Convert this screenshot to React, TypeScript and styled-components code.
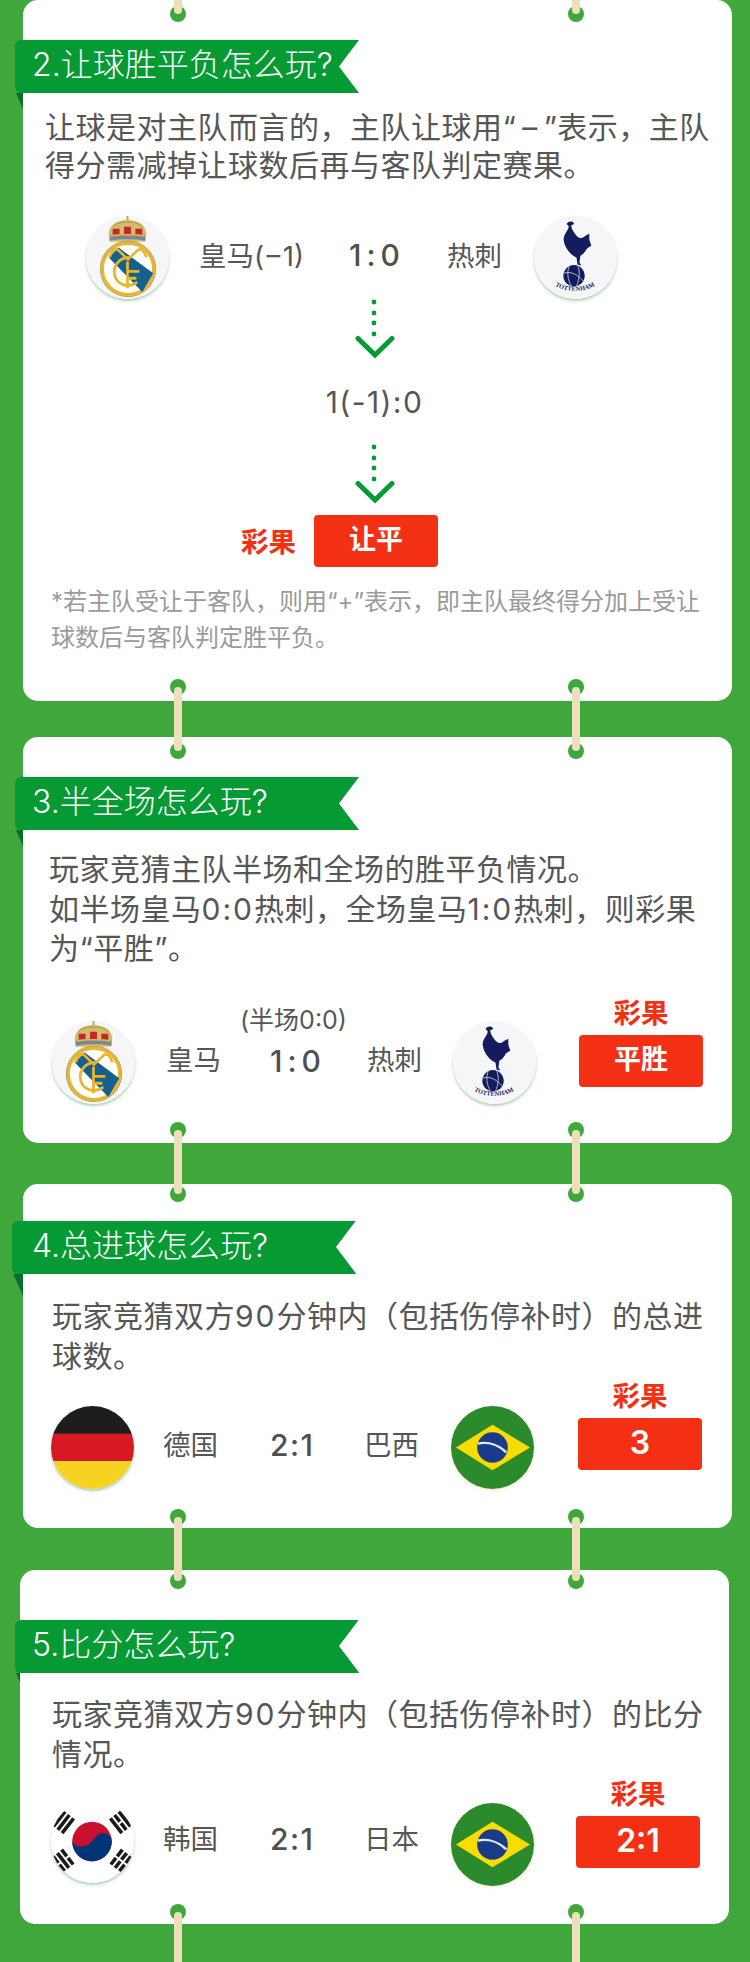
import React from "react";
import styled, { createGlobalStyle } from "styled-components";

const GREEN = "#3fa73c";
const RIBBON = "#069a34";
const RED = "#f43014";
const TEXT = "#565656";
const RING_X = [178, 576];

const Global = createGlobalStyle`
  html, body { margin: 0; padding: 0; background: ${GREEN}; }
  body { font-family: Inter, "Noto Sans CJK SC", "Noto Sans", sans-serif; }
`;

const Page = styled.div`
  width: 750px;
  height: 1962px;
  overflow: hidden;
  background: ${GREEN};
`;

const Card = styled.section<{ $left: number; $top: number; $pt: number; $pb: number }>`
  position: relative;
  box-sizing: border-box;
  width: 709px;
  margin-left: ${(p) => p.$left}px;
  margin-top: ${(p) => p.$top}px;
  padding-top: ${(p) => p.$pt}px;
  padding-bottom: ${(p) => p.$pb}px;
  background: #fff;
  border-radius: 15px;
`;

const Hole = styled.i<{ $x: number; $y: number; $from: "top" | "bottom" }>`
  position: absolute;
  left: ${(p) => p.$x - 8}px;
  ${(p) => p.$from}: ${(p) => p.$y - 8}px;
  width: 16px;
  height: 16px;
  border-radius: 50%;
  background: ${GREEN};
`;

const Peg = styled.i<{ $x: number; $top?: number; $bottom?: number; $len: number }>`
  position: absolute;
  z-index: 2;
  left: ${(p) => p.$x - 4}px;
  ${(p) => (p.$top !== undefined ? `top: ${p.$top}px;` : "")}
  ${(p) => (p.$bottom !== undefined ? `bottom: ${p.$bottom}px;` : "")}
  width: 8px;
  height: ${(p) => p.$len}px;
  border-radius: 4px;
  background: #eedfbb;
`;

const Banner = styled.h2<{ $over: number; $pad: number }>`
  position: relative;
  box-sizing: border-box;
  width: 344px;
  height: 53px;
  margin: 0 0 0 ${(p) => -p.$over}px;
  padding-left: ${(p) => p.$pad}px;
  background: ${RIBBON};
  border-radius: 6px 0 0 6px;
  color: #fff;
  font-size: 32px;
  font-weight: 300;
  line-height: 49px;
  white-space: nowrap;
  &::before {
    content: "";
    position: absolute;
    left: 1px;
    top: 53px;
    width: ${(p) => p.$over - 1}px;
    height: ${(p) => p.$over * 2}px;
    background: #05702c;
    clip-path: polygon(0 0, 100% 0, 100% 100%);
  }
  &::after {
    content: "";
    position: absolute;
    right: 0;
    top: 0;
    width: 20px;
    height: 100%;
    background: #fff;
    clip-path: polygon(100% 0, 0 50%, 100% 100%);
  }
`;

const Para = styled.p<{ $x: number; $mt: number; $lh: number }>`
  margin: ${(p) => p.$mt}px 0 0 ${(p) => p.$x}px;
  color: ${TEXT};
  font-size: 30px;
  letter-spacing: 0.5px;
  line-height: ${(p) => p.$lh}px;
  white-space: nowrap;
`;

const Num = styled.span`
  letter-spacing: 2px;
`;

const Row = styled.div<{ $mt: number; $pad: number; $cols: string }>`
  display: grid;
  grid-template-columns: ${(p) => p.$cols};
  grid-template-rows: 84px;
  align-items: center;
  margin-top: ${(p) => p.$mt}px;
  padding-left: ${(p) => p.$pad}px;
`;

const Team = styled.div<{ $inset?: number }>`
  padding-left: ${(p) => p.$inset ?? 0}px;
  margin-top: -9px;
  color: ${TEXT};
  font-size: 27.5px;
  white-space: nowrap;
`;

const Score = styled.div<{ $wide?: boolean }>`
  color: #4f4f4f;
  font-size: 30px;
  font-weight: 500;
  line-height: 44px;
  margin-top: -6px;
  letter-spacing: ${(p) => (p.$wide ? 5 : 1.5)}px;
  white-space: nowrap;
`;

const ScoreStack = styled.div`
  align-self: start;
  margin-top: -16px;
`;

const HalfNote = styled.div`
  margin-left: -30px;
  color: ${TEXT};
  font-size: 25px;
  line-height: 30px;
  white-space: nowrap;
`;

const StackScore = styled(Score)`
  line-height: 52px;
  margin-top: 0;
`;

const Badge = styled.svg<{ $nudge?: number; $glow?: boolean }>`
  display: block;
  width: 83px;
  height: 83px;
  align-self: start;
  margin-top: ${(p) => p.$nudge ?? 0}px;
  border-radius: 50%;
  box-shadow: ${(p) => (p.$glow ? "0 1px 3px rgba(240,170,120,.4)" : "0 2px 3px rgba(70, 150, 80, 0.45)")};
`;

const Result = styled.div<{ $ml: number; $mb: number }>`
  align-self: end;
  display: flex;
  flex-direction: column;
  align-items: center;
  width: 124px;
  margin-left: ${(p) => p.$ml}px;
  margin-bottom: ${(p) => p.$mb}px;
`;

const Label = styled.div`
  color: ${RED};
  font-size: 27.5px;
  font-weight: 700;
  line-height: 36px;
  margin-bottom: 4px;
  white-space: nowrap;
`;

const Pill = styled.div<{ $num?: boolean }>`
  width: 124px;
  height: 52px;
  border-radius: 4px;
  background: ${RED};
  color: #fff;
  text-align: center;
  font-size: ${(p) => (p.$num ? 32 : 27)}px;
  font-weight: 600;
  line-height: 50px;
`;

const FlowColumn = styled.div`
  display: flex;
  flex-direction: column;
  align-items: center;
  padding-right: 6px;
`;

const ArrowIcon = styled.svg<{ $mt: number }>`
  display: block;
  width: 40px;
  height: 60px;
  margin-top: ${(p) => p.$mt}px;
`;

const Calc = styled.div`
  margin-top: 23px;
  color: ${TEXT};
  font-size: 30px;
  letter-spacing: 1.4px;
  line-height: 40px;
`;

const ResultLine = styled.div`
  display: flex;
  align-items: center;
  gap: 18px;
  margin-top: 11px;
  padding-left: 218px;
`;

const InlineLabel = styled(Label)`
  margin: 2px 0 0;
`;

const Note = styled.p`
  margin: 17px 0 0 28px;
  color: #9a9a9a;
  font-size: 24px;
  line-height: 36px;
  white-space: nowrap;
`;

const Rings = ({ left, top, bottom, lead }: { left: number; top: number; bottom: number; lead?: boolean }) => (
  <>
    {RING_X.map((x) => (
      <React.Fragment key={x}>
        <Hole $x={x - left} $y={top} $from="top" />
        <Hole $x={x - left} $y={bottom} $from="bottom" />
        {lead && <Peg $x={x - left} $top={-20} $len={20 + top} />}
        <Peg $x={x - left} $bottom={bottom - 64} $len={64} />
      </React.Fragment>
    ))}
  </>
);

const Arrow = ({ mt }: { mt: number }) => (
  <ArrowIcon $mt={mt} viewBox="0 0 40 60">
    {[3, 14, 24, 35].map((y) => (
      <circle key={y} cx="19" cy={y} r="2.4" fill={RIBBON} />
    ))}
    <path d="M3 39.5 L20 56 L37 39.5" fill="none" stroke={RIBBON} strokeWidth="5" strokeLinecap="round" strokeLinejoin="miter" />
  </ArrowIcon>
);

const Madrid = () => (
  <Badge viewBox="0 0 84 84">
    <rect width="84" height="84" fill="#f6f6f8" />
    <path d="M42 0v5" stroke="#c9a83a" strokeWidth="2" />
    <path d="M23 18C23 9 32 4 42 4S61 9 61 18L60 26H24Z" fill="#d2bb6a" />
    <path d="M27 11C31 7 36 6 42 6S53 7 57 11" fill="none" stroke="#a89648" strokeWidth="1" />
    <path d="M27 13h7v6h-7zM38.5 11h7v8h-7zM50 13h7v6h-7z" fill="#c8242c" />
    <path d="M24 20C34 18 50 18 60 20V25C50 23 34 23 24 25Z" fill="#76879a" />
    <path d="M25 20.5C34 18.5 50 18.5 59 20.5" fill="none" stroke="#e0bb3c" strokeWidth="1.4" />
    <circle cx="42.5" cy="53.5" r="28.5" fill="#8d98a0" />
    <circle cx="42.5" cy="53.5" r="26.2" fill="#fff" stroke="#eab52e" strokeWidth="3.6" />
    <path d="M23 42 L33 32 L68 58 L57 77 Z" fill="#14608f" />
    <path d="M24 42C26 35 29 33 32 34L42.5 44L53 34C56 33 59 35 61 42" fill="none" stroke="#eab52e" strokeWidth="2.6" />
    <path d="M44 42C33 42 27 51 29 60C31 69 42 74 52 67" fill="none" stroke="#eab52e" strokeWidth="2.8" />
    <path d="M42 46V73M42 56H54M42 63H51" fill="none" stroke="#eab52e" strokeWidth="2.8" />
  </Badge>
);

const Spurs = () => (
  <Badge viewBox="0 0 84 84">
    <rect width="84" height="84" fill="#f6f6f8" />
    <path
      d="M33 8C35 5 39 5 40 7L41 8 38 9C37 12 40 16 43 20 47 24 50 22 52 20L56 18 56 24 58 30C55 32 53 33 53 34 51 38 48 40 47 40L46 47 48 50 44 49 43 42C38 40 31 33 30 24 30 17 36 14 35 10Z"
      fill="#141b5e"
    />
    <circle cx="40.5" cy="60.5" r="10.8" fill="#141b5e" />
    <path d="M30 58C37 55 45 60 50 66M36 50C33 56 34 65 38 71M44 50C47 56 46 64 43 71" fill="none" stroke="#d9dbe8" strokeWidth="0.8" />
    <path id="spurs-arc" d="M19 69C30 78 52 78 64 69" fill="none" />
    <text fontFamily="Liberation Serif, serif" fontSize="6.4" fontWeight="700" fill="#141b5e">
      <textPath href="#spurs-arc" startOffset="50%" textAnchor="middle">TOTTENHAM</textPath>
    </text>
  </Badge>
);

const Germany = () => (
  <Badge viewBox="0 0 84 84">
    <rect width="84" height="28.5" fill="#1d1d1b" />
    <rect y="28" width="84" height="28" fill="#d71a21" />
    <rect y="56" width="84" height="28" fill="#f6d321" />
  </Badge>
);

const Brazil = ({ nudge }: { nudge?: number }) => (
  <Badge viewBox="0 0 84 84" $nudge={nudge} $glow>
    <rect width="84" height="84" fill="#2b8a2c" />
    <path d="M42 19 L80 42 L42 65 L5 42 Z" fill="#fbdc00" />
    <circle cx="42" cy="42" r="15.5" fill="#1a3a8a" />
    <path d="M27 38C37 36 48 39 56 47" fill="none" stroke="#dfe6ee" strokeWidth="2.4" />
  </Badge>
);

const Trigram = ({ x, y, r, bars }: { x: number; y: number; r: number; bars: number[] }) => (
  <g transform={`translate(${x} ${y}) rotate(${r})`}>
    {bars.map((b, i) => {
      const yy = -7 + i * 5.5;
      return b === 3 ? (
        <rect key={i} x="-9.5" y={yy} width="19" height="3.6" fill="#1a1a1a" />
      ) : (
        <g key={i}>
          <rect x="-9.5" y={yy} width="8.5" height="3.6" fill="#1a1a1a" />
          <rect x="1" y={yy} width="8.5" height="3.6" fill="#1a1a1a" />
        </g>
      );
    })}
  </g>
);

const Korea = () => (
  <Badge viewBox="0 0 84 84">
    <rect width="84" height="84" fill="#fff" />
    <circle cx="41.5" cy="42" r="20" fill="#c8102e" />
    <path d="M21.5 42C21.5 53 30.5 62 41.5 62S61.5 53 61.5 42C61.5 36 54.5 32 49.5 34 43.5 37 42.5 44 35.5 46 29.5 48 23.5 47 21.5 42Z" fill="#003478" />
    <Trigram x={12.5} y={22.5} r={-52} bars={[3, 3, 3]} />
    <Trigram x={70.5} y={22.5} r={52} bars={[3, 1, 3]} />
    <Trigram x={12.5} y={61} r={52} bars={[1, 3, 1]} />
    <Trigram x={70.5} y={61} r={-52} bars={[1, 1, 1]} />
  </Badge>
);

export default function App() {
  return (
    <Page>
      <Global />
      <Card $left={23} $top={0} $pt={40} $pb={45}>
        <Rings left={23} top={14} bottom={14} lead />
        <Banner $over={8} $pad={17}>2.让球胜平负怎么玩?</Banner>
        <Para $x={22} $mt={15} $lh={38}>
          让球是对主队而言的，主队让球用“{"\u2009–\u2009"}”表示，主队
          <br />
          得分需减掉让球数后再与客队判定赛果。
        </Para>
        <Row $mt={32} $pad={63} $cols="84px 179px 98px 87px 84px">
          <Madrid />
          <Team $inset={29}>皇马({"\u200a–\u200a"}1)</Team>
          <Score $wide>1:0</Score>
          <Team>热刺</Team>
          <Spurs />
        </Row>
        <FlowColumn>
          <Arrow mt={-1} />
          <Calc>1(-1):0</Calc>
          <Arrow mt={22} />
        </FlowColumn>
        <ResultLine>
          <InlineLabel>彩果</InlineLabel>
          <Pill>让平</Pill>
        </ResultLine>
        <Note>
          *若主队受让于客队，则用“+”表示，即主队最终得分加上受让
          <br />
          球数后与客队判定胜平负。
        </Note>
      </Card>

      <Card $left={23} $top={36} $pt={40} $pb={38}>
        <Rings left={23} top={14} bottom={13} />
        <Banner $over={8} $pad={17}>3.半全场怎么玩?</Banner>
        <Para $x={26} $mt={20} $lh={39.5}>
          玩家竞猜主队半场和全场的胜平负情况。
          <br />
          如半场皇马<Num>0:0</Num>热刺，全场皇马<Num>1:0</Num>热刺，则彩果
          <br />
          为“平胜”。
        </Para>
        <Row $mt={52} $pad={29} $cols="83px 135px 97px 86px 83px 1fr">
          <Madrid />
          <Team $inset={31}>皇马</Team>
          <ScoreStack>
            <HalfNote>(半场0:0)</HalfNote>
            <StackScore $wide>1:0</StackScore>
          </ScoreStack>
          <Team>热刺</Team>
          <Spurs />
          <Result $ml={43} $mb={18}>
            <Label>彩果</Label>
            <Pill>平胜</Pill>
          </Result>
        </Row>
      </Card>

      <Card $left={23} $top={41} $pt={37} $pb={38}>
        <Rings left={23} top={10} bottom={11} />
        <Banner $over={11} $pad={20}>4.总进球怎么玩?</Banner>
        <Para $x={29} $mt={22} $lh={40}>
          玩家竞猜双方<Num>90</Num>分钟内（包括伤停补时）的总进
          <br />
          球数。
        </Para>
        <Row $mt={30} $pad={28} $cols="83px 136px 94px 87px 83px 1fr">
          <Germany />
          <Team $inset={29}>德国</Team>
          <Score>2:1</Score>
          <Team>巴西</Team>
          <Brazil />
          <Result $ml={44} $mb={20}>
            <Label>彩果</Label>
            <Pill $num>3</Pill>
          </Result>
        </Row>
      </Card>

      <Card $left={20} $top={42} $pt={50} $pb={40}>
        <Rings left={20} top={11} bottom={12} />
        <Banner $over={5} $pad={17}>5.比分怎么玩?</Banner>
        <Para $x={32} $mt={21} $lh={40}>
          玩家竞猜双方<Num>90</Num>分钟内（包括伤停补时）的比分
          <br />
          情况。
        </Para>
        <Row $mt={26} $pad={31} $cols="83px 136px 94px 87px 83px 1fr">
          <Korea />
          <Team $inset={29}>韩国</Team>
          <Score>2:1</Score>
          <Team>日本</Team>
          <Brazil nudge={3} />
          <Result $ml={42} $mb={16}>
            <Label>彩果</Label>
            <Pill $num>2:1</Pill>
          </Result>
        </Row>
      </Card>
    </Page>
  );
}
